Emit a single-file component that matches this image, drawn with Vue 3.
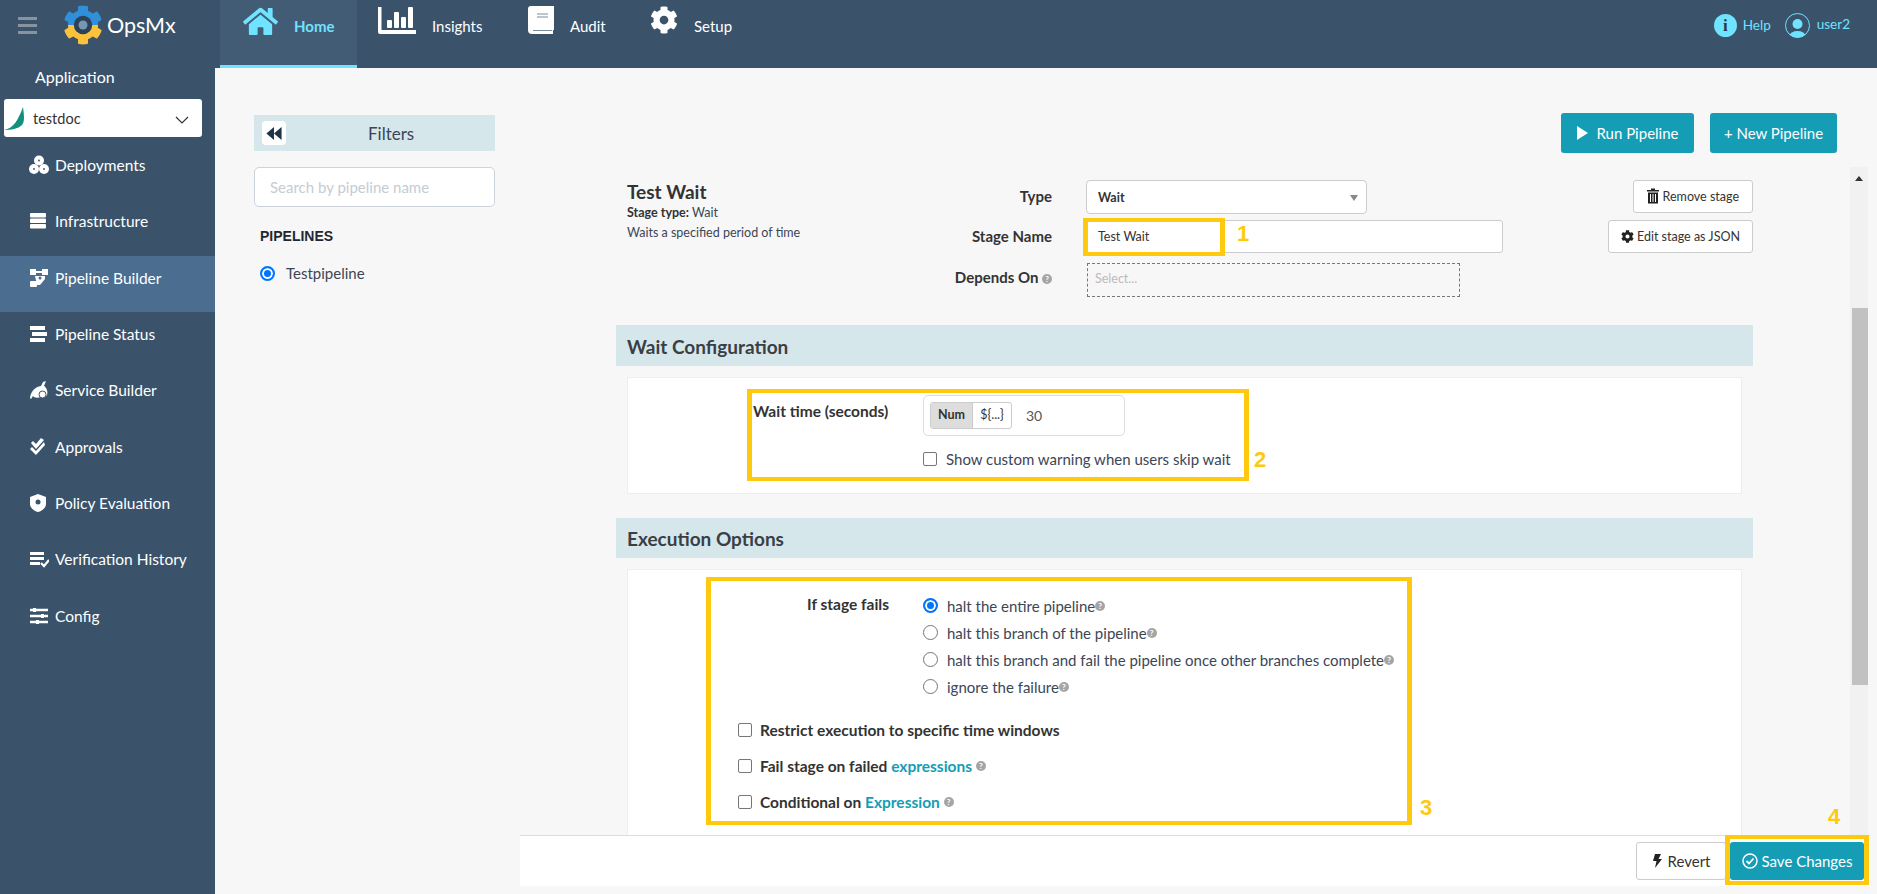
<template>
  <div class="page">
    <header class="topbar">
      <div class="burger"><i></i><i></i><i></i></div>
      <div class="brand">
        <svg class="gear" viewBox="0 0 512 512">
          <defs>
            <clipPath id="top-half"><rect x="0" y="0" width="512" height="256" /></clipPath>
            <clipPath id="low-half"><rect x="0" y="256" width="512" height="256" /></clipPath>
          </defs>
          <path :d="cogPath" fill="#2f8fd8" clip-path="url(#top-half)" />
          <path :d="cogPath" fill="#fcc23c" clip-path="url(#low-half)" />
          <circle cx="256" cy="256" r="118" fill="#2c4258" />
          <circle cx="256" cy="256" r="58" fill="#8fb4cf" opacity=".75" />
        </svg>
        <span>OpsMx</span>
      </div>
      <nav class="tabs">
        <a class="tab home active">
          <svg viewBox="0 0 576 512" class="t-home"><path :d="homePath" /></svg>
          <b>Home</b>
        </a>
        <a class="tab insights">
          <svg viewBox="0 0 38 28" class="t-ins">
            <path d="M0 1h3.5v23H38v4H2a2 2 0 0 1-2-2z" />
            <rect x="9" y="14" width="5" height="8" rx="1" />
            <rect x="16" y="6" width="5" height="16" rx="1" />
            <rect x="23" y="11" width="5" height="11" rx="1" />
            <rect x="30" y="1" width="5" height="21" rx="1" />
          </svg>
          <span>Insights</span>
        </a>
        <a class="tab audit">
          <svg viewBox="0 0 26 28" class="t-aud">
            <path d="M3 0h23v24h-1v4H4a4 4 0 0 1-4-4V3a3 3 0 0 1 3-3z" />
            <path d="M9 8h11M9 11h11M5 24.500h19" stroke="#7a8c9c" stroke-width="1" fill="none" />
          </svg>
          <span>Audit</span>
        </a>
        <a class="tab setup">
          <svg viewBox="0 0 512 512" class="t-cog"><path :d="cogPath" /></svg>
          <span>Setup</span>
        </a>
      </nav>
      <div class="top-right">
        <span class="info">i</span>
        <span class="help">Help</span>
        <svg class="avatar" viewBox="0 0 25 25">
          <defs><clipPath id="av"><circle cx="12.500" cy="12.500" r="12" /></clipPath></defs>
          <circle cx="12.500" cy="12.500" r="12" fill="none" stroke="#6fe3ff" />
          <circle cx="12.500" cy="11" r="5" fill="#6fe3ff" />
          <ellipse cx="12.500" cy="23" rx="8" ry="5" fill="#6fe3ff" clip-path="url(#av)" />
        </svg>
        <span class="uname">user2</span>
      </div>
    </header>

    <div class="body">
      <aside class="sidebar">
        <div class="app-label">Application</div>
        <div class="app-select">
          <svg viewBox="0 0 20 24" class="leaf"><path d="M0 24C10 22 14 14 19 1c1 8 2 14-1 18-4 4-11 5-18 5z" fill="#12907f" /></svg>
          <span>testdoc</span>
          <svg viewBox="0 0 14 8" class="chev"><path d="M1 1l6 6 6-6" fill="none" stroke="#333" stroke-width="1.200" /></svg>
        </div>
        <ul class="menu">
          <li v-for="item in menu" :key="item.name" :class="{ on: item.name === 'Pipeline Builder' }">
            <svg viewBox="0 0 20 20" class="m-icon" v-html="item.icon"></svg>
            <span>{{ item.name }}</span>
          </li>
        </ul>
      </aside>

      <main class="main">
        <section class="filters">
          <div class="filter-head">
            <span class="collapse">
              <svg viewBox="0 0 14 12"><path d="M7 0v12L0 6zM14 0v12L7 6z" fill="#1d3346" /></svg>
            </span>
            <span class="filter-title">Filters</span>
          </div>
          <div class="search">Search by pipeline name</div>
          <h4>PIPELINES</h4>
          <label class="pipe"><span class="radio checked"></span>Testpipeline</label>
        </section>

        <section class="content">
          <div class="actions">
            <button class="btn-teal">
              <svg viewBox="0 0 11 14" class="play"><path d="M0 0l11 7-11 7z" fill="#fff" /></svg>
              Run Pipeline
            </button>
            <button class="btn-teal new">+ New Pipeline</button>
          </div>

          <div class="scroller">
            <div class="stage">
              <div class="stage-head">
                <div class="stage-info">
                  <h3>Test Wait</h3>
                  <p><b>Stage type:</b> Wait</p>
                  <p class="desc">Waits a specified period of time</p>
                </div>
                <label class="lb r1">Type</label>
                <div class="type-select r1"><b>Wait</b><i class="caret"></i></div>
                <div class="side-btn r1">
                  <button class="btn-line">
                    <svg viewBox="0 0 12 15" class="trash"><path d="M4 0h4v1.500h4V3H0V1.500h4zM1 4h10v11H1zM3 5.500v8h1v-8zM5.500 5.500v8h1v-8zM8 5.500v8h1v-8z" fill="#222" fill-rule="evenodd" /></svg>
                    Remove stage
                  </button>
                </div>
                <label class="lb r2">Stage Name</label>
                <div class="name-input r2">Test Wait</div>
                <div class="side-btn r2">
                  <button class="btn-line">
                    <svg viewBox="0 0 512 512" class="gearb"><path :d="cogPath" fill="#222" /></svg>
                    Edit stage as JSON
                  </button>
                </div>
                <label class="lb r3">Depends On <span class="q">?</span></label>
                <div class="depends r3">Select...</div>
              </div>

              <div class="sec-head wait-head">Wait Configuration</div>
              <div class="box wait-box">
                <div class="wait-label">Wait time (seconds)</div>
                <div>
                  <div class="num-box">
                    <div class="toggle"><b>Num</b><span>${...}</span></div>
                    <span class="num">30</span>
                  </div>
                  <label class="chk-line"><span class="chk"></span>Show custom warning when users skip wait</label>
                </div>
              </div>

              <div class="sec-head exec-head">Execution Options</div>
              <div class="box exec-box">
                <div class="fail-row">
                  <div class="fail-label">If stage fails</div>
                  <div>
                    <label v-for="(opt, i) in failOptions" :key="opt" class="opt">
                      <span class="radio" :class="{ checked: i === 0 }"></span>{{ opt }}<span class="q">?</span>
                    </label>
                  </div>
                </div>
                <div class="check-rows">
                  <label class="chk-bold"><span class="chk"></span>Restrict execution to specific time windows</label>
                  <label class="chk-bold"><span class="chk"></span>Fail stage on failed&nbsp;<a>expressions</a>&nbsp;<span class="q">?</span></label>
                  <label class="chk-bold"><span class="chk"></span>Conditional on&nbsp;<a>Expression</a>&nbsp;<span class="q">?</span></label>
                </div>
              </div>
            </div>
            <div class="scrollbar">
              <i class="arrow"></i>
              <i class="thumb"></i>
            </div>
          </div>

          <div class="footer">
            <button class="revert">
              <svg viewBox="0 0 10 14" class="bolt"><path d="M3 0h6L6.500 5H10L3 14l1.500-7H1z" fill="#222" /></svg>
              Revert
            </button>
            <button class="save">
              <svg viewBox="0 0 16 16" class="ok"><circle cx="8" cy="8" r="7" fill="none" stroke="#fff" stroke-width="1.500" /><path d="M4.500 8l2.500 2.500 4.500-5" fill="none" stroke="#fff" stroke-width="1.800" /></svg>
              Save Changes
            </button>
          </div>
        </section>
      </main>
    </div>

    <div class="mark m1"></div><span class="note n1">1</span>
    <div class="mark m2"></div><span class="note n2">2</span>
    <div class="mark m3"></div><span class="note n3">3</span>
    <div class="mark m4"></div><span class="note n4">4</span>
  </div>
</template>

<script setup>
const homePath = 'M280.37 148.26L96 300.11V464a16 16 0 0 0 16 16l112.06-.29a16 16 0 0 0 15.92-16V368a16 16 0 0 1 16-16h64a16 16 0 0 1 16 16v95.64a16 16 0 0 0 16 16.05L464 480a16 16 0 0 0 16-16V300L295.67 148.26a12.19 12.19 0 0 0-15.3 0zM571.6 251.47L488 182.56V44.05a12 12 0 0 0-12-12h-56a12 12 0 0 0-12 12v72.61L318.47 43a48 48 0 0 0-61 0L4.34 251.47a12 12 0 0 0-1.6 16.9l25.5 31A12 12 0 0 0 45.15 301l235.22-193.74a12.19 12.19 0 0 1 15.3 0L530.9 301a12 12 0 0 0 16.9-1.6l25.5-31a12 12 0 0 0-1.7-16.93z'
const cogPath = 'M487.4 315.7l-42.6-24.6c4.3-23.2 4.3-47 0-70.2l42.6-24.6c4.9-2.8 7.1-8.6 5.500-14-11.100-35.600-30-67.800-54.700-94.600-3.800-4.100-10-5.100-14.800-2.300L380.800 110c-17.900-15.400-38.500-27.300-60.800-35.100V25.800c0-5.600-3.900-10.500-9.400-11.700-36.700-8.200-74.300-7.800-109.200 0-5.500 1.200-9.400 6.100-9.400 11.700V75c-22.200 7.900-42.800 19.800-60.800 35.100L88.700 85.500c-4.900-2.800-11-1.900-14.800 2.300-24.700 26.700-43.600 58.900-54.700 94.600-1.700 5.400.6 11.200 5.500 14L67.300 221c-4.300 23.200-4.300 47 0 70.200l-42.600 24.600c-4.900 2.800-7.100 8.600-5.500 14 11.100 35.600 30 67.800 54.700 94.600 3.800 4.100 10 5.100 14.800 2.300l42.600-24.600c17.900 15.400 38.500 27.300 60.800 35.100v49.200c0 5.600 3.900 10.500 9.400 11.700 36.700 8.200 74.300 7.800 109.200 0 5.500-1.200 9.400-6.100 9.400-11.700v-49.200c22.200-7.900 42.800-19.800 60.800-35.100l42.600 24.600c4.900 2.800 11 1.900 14.800-2.300 24.700-26.700 43.600-58.900 54.700-94.600 1.500-5.500-.7-11.300-5.600-14.100zM256 336c-44.100 0-80-35.900-80-80s35.900-80 80-80 80 35.900 80 80-35.900 80-80 80z'

const menu = [
  { name: 'Deployments', icon: '<circle cx="10" cy="5.500" r="5" fill="#fff"/><circle cx="5" cy="14" r="5" fill="#fff"/><circle cx="15" cy="14" r="5" fill="#fff"/><circle cx="10" cy="5.500" r=".9" fill="#3a536b"/><circle cx="5" cy="14" r=".9" fill="#3a536b"/><circle cx="15" cy="14" r=".9" fill="#3a536b"/>' },
  { name: 'Infrastructure', icon: '<rect x="1" y="2" width="16" height="4.500" rx="1" fill="#fff"/><rect x="1" y="7.500" width="16" height="4.500" rx="1" fill="#fff"/><rect x="1" y="13" width="16" height="4.500" rx="1" fill="#fff"/>' },
  { name: 'Pipeline Builder', icon: '<rect x="1" y="1" width="6" height="6" fill="#fff"/><rect x="13" y="1" width="6" height="6" fill="#fff"/><rect x="1" y="13" width="7" height="6" rx="1" fill="#fff"/><path d="M7 4h6" stroke="#fff" stroke-width="2"/><path d="M6 8h10v3l-5 6H8z" fill="#fff"/><circle cx="11" cy="10" r="1.500" fill="#4a6d90"/>' },
  { name: 'Pipeline Status', icon: '<rect x="1" y="2" width="15" height="4" fill="#fff"/><rect x="3" y="8" width="15" height="4" fill="#fff"/><rect x="1" y="14" width="15" height="4" fill="#fff"/>' },
  { name: 'Service Builder', icon: '<path d="M1 18c1-7 5-11 11-12l2-4 3-1-2 5c3 2 4 6 3 9-1 2-4 3-6 2-3 1-7 1-8-1l-2 3z" fill="#fff"/><circle cx="13.500" cy="14.500" r="3.500" fill="#fff" stroke="#3a536b" stroke-width="1"/>' },
  { name: 'Approvals', icon: '<path d="M2 6l2-2 3 3 5-6 3 2-8 9zM1 12l2-2 4 4 8-9 1 3-9 10z" fill="#fff"/>' },
  { name: 'Policy Evaluation', icon: '<path d="M9 1l8 3v7c0 4-4 7-8 8-4-1-8-4-8-8V4z" fill="#fff"/><circle cx="9" cy="9" r="2.500" fill="#3a536b"/>' },
  { name: 'Verification History', icon: '<rect x="1" y="3" width="14" height="3" fill="#fff"/><rect x="1" y="8" width="14" height="3" fill="#fff"/><rect x="1" y="13" width="10" height="3" fill="#fff"/><path d="M12 14l3 3 5-6" fill="none" stroke="#fff" stroke-width="2.200"/>' },
  { name: 'Config', icon: '<path d="M1 4h18M1 10h18M1 16h18" stroke="#fff" stroke-width="2.500"/><rect x="4" y="2" width="3" height="4" fill="#fff"/><rect x="12" y="8" width="3" height="4" fill="#fff"/><rect x="7" y="14" width="3" height="4" fill="#fff"/>' }
]

const failOptions = [
  'halt the entire pipeline',
  'halt this branch of the pipeline',
  'halt this branch and fail the pipeline once other branches complete',
  'ignore the failure'
]
</script>

<style>
html, body { margin: 0; overflow: hidden; }
</style>

<style scoped>
.page {
  position: relative;
  width: 1877px;
  height: 894px;
  overflow: hidden;
  background: #f7f7f7;
  color: #333;
  font-family: Lato, "Noto Sans", sans-serif;
  font-size: 14px;
}

.topbar {
  display: flex;
  height: 68px;
  background: #3a536b;
  color: #fff;
}
.burger {
  width: 19px;
  margin: 17px 0 0 18px;
}
.burger i {
  display: block;
  height: 3px;
  margin-bottom: 4px;
  background: #87949f;
}
.brand {
  display: flex;
  width: 183px;
  padding-left: 26px;
  gap: 4px;
  height: 50px;
  align-items: center;
  box-sizing: border-box;
  font-size: 21.500px;
}
.gear { width: 40px; height: 40px; flex: none; }

.tabs { display: flex; }
.tab {
  display: flex;
  align-items: flex-start;
  box-sizing: border-box;
  height: 68px;
  padding-top: 6px;
  font-size: 15px;
}
.tab span, .tab b { margin-top: 11px; }
.tab svg { fill: #fff; flex: none; }
.tab.active {
  background: #435c75;
  border-bottom: 3px solid #6fe3ff;
  color: #6fe3ff;
}
.tab.active svg { fill: #6fe3ff; }
.home { width: 137px; padding-left: 23px; gap: 16px; }
.insights { padding-left: 21px; gap: 16px; width: 171px; }
.audit { gap: 16px; width: 122px; }
.setup { gap: 16px; }
.t-home { width: 35px; height: 31px; }
.t-ins { width: 38px; height: 28px; }
.t-aud { width: 26px; height: 28px; }
.t-cog { width: 28px; height: 28px; }

.top-right {
  display: flex;
  align-items: center;
  margin-left: auto;
  height: 50px;
  padding-right: 27px;
  color: #6fe3ff;
  font-size: 13.500px;
}
.info {
  width: 23px;
  height: 23px;
  border-radius: 50%;
  background: #6fe3ff;
  color: #24384b;
  font: bold 17px/23px "Liberation Serif", serif;
  text-align: center;
}
.help { margin: 0 14px 0 6px; }
.avatar { width: 25px; height: 25px; margin-right: 7px; }
.uname { margin-top: -2px; }

.body {
  display: flex;
  height: 826px;
}
.sidebar {
  width: 215px;
  flex: none;
  background: #3a536b;
  color: #fff;
  font-size: 15.500px;
}
.app-label {
  padding: 0 0 0 35px;
  height: 31px;
  line-height: 18px;
  font-size: 16px;
}
.app-select {
  display: flex;
  align-items: center;
  height: 38px;
  width: 198px;
  margin-left: 4px;
  border-radius: 3px;
  background: #fff;
  color: #333;
  font-size: 14.500px;
}
.leaf { width: 20px; height: 24px; flex: none; }
.app-select span { margin-left: 9px; }
.chev { width: 14px; height: 8px; margin-left: auto; margin-right: 13px; margin-top: 4px; }
.menu {
  list-style: none;
  margin: 6px 0 0;
  padding: 0;
}
.menu li {
  display: flex;
  align-items: center;
  box-sizing: border-box;
  height: 56.300px;
  padding: 0 0 12px 29px;
}
.menu li.on { background: #4a6d90; }
.m-icon { width: 20px; height: 20px; margin-right: 6px; flex: none; }

.main {
  display: flex;
  flex: 1;
  min-width: 0;
}
.filters {
  width: 241px;
  margin-left: 39px;
  padding-top: 47px;
  flex: none;
}
.filter-head {
  display: flex;
  align-items: center;
  height: 36px;
  background: #d6e7ec;
  padding-left: 8px;
}
.collapse {
  display: flex;
  align-items: center;
  justify-content: center;
  width: 24px;
  height: 24px;
  background: #fff;
  border-radius: 4px;
}
.collapse svg { width: 16px; height: 13px; }
.filter-title {
  flex: 1;
  padding-left: 82px;
  font-size: 17px;
  color: #3b4656;
}
.search {
  box-sizing: border-box;
  height: 40px;
  margin-top: 16px;
  padding: 0 15px;
  border: 1px solid #ccd3dc;
  border-radius: 5px;
  background: #fff;
  color: #c5ccd3;
  font-size: 15px;
  line-height: 38px;
}
.filters h4 {
  margin: 21px 0 0 6px;
  font: bold 14px/16px "Liberation Sans", Arial, sans-serif;
  color: #1f2733;
}
.pipe {
  display: flex;
  align-items: center;
  gap: 11px;
  margin: 20px 0 0 6px;
  font-size: 15px;
  color: #3b4656;
}

.radio {
  display: inline-block;
  box-sizing: border-box;
  width: 15px;
  height: 15px;
  flex: none;
  border: 1px solid #767676;
  border-radius: 50%;
  background: #fff;
}
.radio.checked {
  border: 2px solid #0075ff;
  box-shadow: inset 0 0 0 2px #fff;
  background: #0075ff;
}

.content {
  flex: 1;
  min-width: 0;
  margin: 0 7px 0 25px;
}
.actions {
  display: flex;
  justify-content: flex-end;
  gap: 16px;
  padding: 45px 33px 0 0;
}
button { font-family: inherit; cursor: pointer; }
.btn-teal {
  display: flex;
  align-items: center;
  justify-content: center;
  gap: 9px;
  width: 133px;
  height: 40px;
  border: 0;
  border-radius: 3px;
  background: #159db6;
  color: #fff;
  font-size: 15px;
}
.btn-teal.new { width: 127px; }
.play { width: 11px; height: 14px; }

.scroller {
  display: flex;
  justify-content: space-between;
  height: 668px;
  margin-top: 14px;
  overflow: hidden;
  padding-right: 2px;
}
.stage {
  width: 1137px;
  margin-left: 96px;
  flex: none;
}
.stage-head {
  display: grid;
  grid-template-columns: 290px 135px 451px 1fr;
  grid-template-rows: 34px 34px 37px;
  column-gap: 0;
  row-gap: 6px;
  padding: 13px 0 0 11px;
}
.stage-info {
  grid-column: 1;
  grid-row: 1 / 4;
  font-size: 12.500px;
  color: #3b4656;
}
.stage-info h3 {
  margin: 0;
  font-size: 19px;
  line-height: 23px;
  font-weight: 700;
  color: #333;
}
.stage-info p { margin: 0; line-height: 20px; }
.stage-info b { color: #333; }
.lb {
  grid-column: 2;
  text-align: right;
  font-weight: 700;
  font-size: 15px;
  line-height: 33px;
  white-space: nowrap;
}
.r1 { grid-row: 1; }
.r2 { grid-row: 2; }
.r3 { grid-row: 3; margin-top: 3px; }
.lb.r3 { line-height: 28px; }
.type-select, .name-input, .depends {
  grid-column: 3;
  margin-left: 34px;
  box-sizing: border-box;
  font-size: 12.500px;
  display: flex;
  align-items: center;
  padding-left: 11px;
}
.type-select {
  width: 281px;
  position: relative;
  border: 1px solid #ccc;
  border-radius: 4px;
  background: #fff;
}
.caret {
  position: absolute;
  right: 8px;
  top: 14px;
  border: 4px solid transparent;
  border-top: 6px solid #888;
  border-bottom: 0;
}
.name-input {
  border: 1px solid #ccc;
  border-radius: 3px;
  background: #fff;
  height: 33px;
}
.depends {
  width: 373px;
  margin-left: 35px;
  border: 1px dashed #777;
  color: #bbb;
  padding-left: 7px;
  align-items: flex-start;
  padding-top: 7px;
}
.side-btn {
  grid-column: 4;
  display: flex;
  justify-content: flex-end;
}
.btn-line {
  display: flex;
  align-items: center;
  gap: 3px;
  height: 33px;
  padding: 0 12px;
  border: 1px solid #ccc;
  border-radius: 3px;
  background: #fff;
  color: #333;
  font-size: 12.500px;
}
.side-btn.r1 .btn-line { padding: 0 13px; gap: 4px; }
.trash { width: 12px; height: 16px; margin-top: -2px; }
.gearb { width: 13px; height: 13px; }

.sec-head {
  box-sizing: border-box;
  background: #d6e7ec;
  padding-left: 11px;
  font-size: 19px;
  font-weight: 700;
  color: #3a3f46;
}
.wait-head { height: 41px; line-height: 44px; margin-top: 28px; }
.exec-head { height: 40px; line-height: 42px; margin-top: 24px; }
.box {
  box-sizing: border-box;
  margin: 11px 11px 0;
  border: 1px solid #eee;
  background: #fff;
}
.wait-box {
  display: flex;
  height: 117px;
  padding: 17px 0 0 125px;
}
.wait-label {
  width: 170px;
  font-weight: 700;
  font-size: 15.500px;
  padding-top: 6px;
  line-height: 20px;
}
.num-box {
  display: flex;
  align-items: center;
  box-sizing: border-box;
  width: 202px;
  height: 41px;
  border: 1px solid #ddd;
  border-radius: 5px;
  padding-left: 6px;
}
.toggle {
  display: flex;
  height: 25px;
  border: 1px solid #ccc;
  border-radius: 3px;
  font-size: 12.500px;
  line-height: 23px;
  text-align: center;
}
.toggle b { width: 41px; background: #ddd; border-right: 1px solid #ccc; }
.toggle span { width: 38px; }
.num { margin-left: 14px; font-size: 14px; color: #555; }
.chk {
  display: inline-block;
  box-sizing: border-box;
  width: 14px;
  height: 14px;
  flex: none;
  border: 1px solid #767676;
  border-radius: 2px;
  background: #fff;
}
.chk-line {
  display: flex;
  align-items: center;
  gap: 9px;
  margin: 14px 0 0;
  font-size: 15px;
  line-height: 18px;
  color: #3b4656;
}
.exec-box {
  height: 300px;
  padding: 22px 0 0 110px;
}
.fail-row { display: flex; }
.fail-label {
  width: 151px;
  margin-right: 34px;
  text-align: right;
  font-weight: 700;
  font-size: 15.500px;
  line-height: 24px;
}
.opt {
  display: flex;
  align-items: center;
  height: 27px;
  gap: 9px;
  font-size: 15px;
  color: #3b4656;
}
.opt .q { margin-left: -9px; }
.q {
  display: inline-block;
  width: 10px;
  height: 10px;
  border-radius: 50%;
  background: #a5a5a5;
  color: #fff;
  font-size: 8px;
  font-weight: 700;
  line-height: 10px;
  text-align: center;
  vertical-align: 1px;
}
.check-rows { margin-top: 12px; }
.chk-bold {
  display: flex;
  align-items: center;
  height: 36px;
  font-size: 15.500px;
  font-weight: 700;
}
.chk-bold .chk { margin-right: 8px; }
.chk-bold a { color: #159db6; }

.scrollbar {
  position: relative;
  width: 18px;
  flex: none;
  background: #f1f1f1;
}
.arrow {
  position: absolute;
  top: 9px;
  left: 5px;
  border: 4px solid transparent;
  border-bottom: 5px solid #333;
  border-top: 0;
}
.thumb {
  position: absolute;
  top: 141px;
  left: 2px;
  right: 0;
  height: 377px;
  background: #c1c1c1;
}

.footer {
  display: flex;
  justify-content: flex-end;
  box-sizing: border-box;
  height: 51px;
  padding: 6px 6px 0 0;
  gap: 4px;
  border-top: 1px solid #ddd;
  background: #fff;
}
.revert, .save {
  display: flex;
  align-items: center;
  justify-content: center;
  height: 38px;
  font-size: 15px;
  border-radius: 3px;
}
.revert {
  width: 90px;
  gap: 6px;
  border: 1px solid #ccc;
  background: #fff;
  color: #333;
}
.bolt { width: 10px; height: 14px; }
.save {
  width: 134px;
  gap: 4px;
  border: 0;
  background: #159db6;
  color: #fff;
}
.ok { width: 16px; height: 16px; }

.mark {
  position: absolute;
  box-sizing: border-box;
  border: solid #ffc90e;
  border-width: 4px 5px;
  pointer-events: none;
}
.m1 { left: 1083px; top: 218px; width: 142px; height: 38px; }
.m2 { left: 747px; top: 389px; width: 502px; height: 92px; }
.m3 { left: 706px; top: 577px; width: 706px; height: 248px; }
.m4 { left: 1725px; top: 835px; width: 144px; height: 50px; }
.note {
  position: absolute;
  color: #ffc90e;
  font: bold 22px/24px "Liberation Sans", Arial, sans-serif;
}
.n1 { left: 1237px; top: 222px; }
.n2 { left: 1254px; top: 448px; }
.n3 { left: 1420px; top: 796px; }
.n4 { left: 1828px; top: 805px; }
</style>
